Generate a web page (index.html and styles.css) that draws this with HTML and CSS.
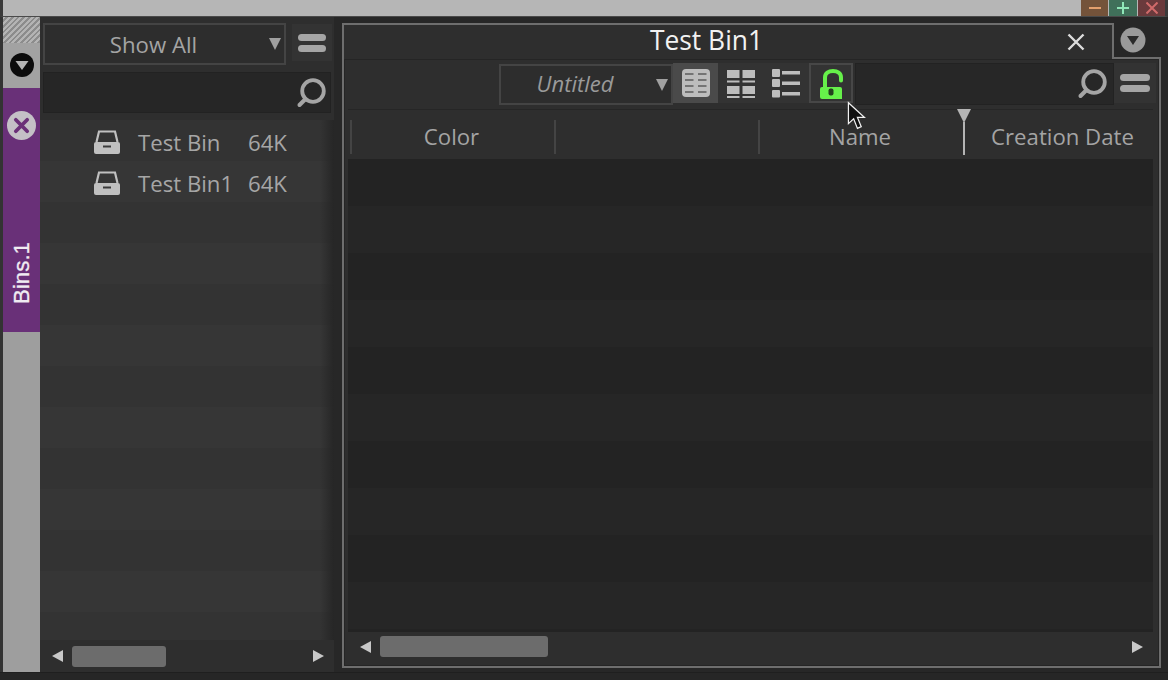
FILE: index.html
```html
<!DOCTYPE html>
<html lang="en">
<head>
<meta charset="utf-8">
<title>Bins</title>
<link rel="stylesheet" href="styles.css">
</head>
<body>
<div class="app">
  <header class="topbar">
    <div class="win win-min"><svg class="win-ico" viewBox="0 0 12 12"><path d="M0 6h12" stroke="#e3a06e" stroke-width="2"/></svg></div>
    <div class="win win-max"><svg class="win-ico" viewBox="0 0 12 12"><path d="M0 6h12M6 0v12" stroke="#8fe6b8" stroke-width="2"/></svg></div>
    <div class="win win-close"><svg class="win-ico" viewBox="0 0 12 12"><path d="M.5.5l11 11M11.500.5l-11 11" stroke="#d06a6a" stroke-width="2"/></svg></div>
  </header>
  <main class="workspace">
    <aside class="strip">
      <div class="hatch"></div>
      <div class="strip-menu">
        <svg class="ico-22" viewBox="0 0 24 24"><circle cx="12" cy="12" r="12" fill="#0c0c0c"/><path d="M5.500 8h13L12 17z" fill="#b4b4b4"/></svg>
      </div>
      <div class="strip-tab">
        <svg class="tab-close" viewBox="0 0 28 28"><circle cx="14" cy="14" r="14" fill="#c4c0c6"/><path d="M8.500 8.500l11 11M19.500 8.500l-11 11" stroke="#6b3078" stroke-width="3.600" stroke-linecap="round"/></svg>
        <span class="tab-label">Bins.1</span>
      </div>
    </aside>

    <section class="bins">
      <div class="bins-top">
        <div class="select select-all"><span class="select-text">Show All</span><i class="caret"></i></div>
        <div class="menu-btn"><i></i><i></i></div>
      </div>
      <div class="search search-left">
        <svg class="ico-search" viewBox="0 0 30 30"><circle cx="17" cy="13" r="10.800" fill="none" stroke="#a5a5a5" stroke-width="3.800"/><path d="M9.500 21l-6 6" stroke="#a5a5a5" stroke-width="4" stroke-linecap="round"/></svg>
      </div>
      <div class="bin-list">
        <div class="bin-row">
          <svg class="ico-bin" viewBox="0 0 28 24"><path d="M3.500 12L6 1.500h16L24.500 12" fill="none" stroke="#c0c0c0" stroke-width="2.200"/><path d="M1 14q0-2 2-2h22q2 0 2 2v8q0 2-2 2H3q-2 0-2-2z" fill="#c0c0c0"/><rect x="10" y="15.500" width="8" height="2" fill="#3a3a3a"/></svg>
          <span class="bin-name">Test Bin</span><span class="bin-size">64K</span>
        </div>
        <div class="bin-row">
          <svg class="ico-bin" viewBox="0 0 28 24"><path d="M3.500 12L6 1.500h16L24.500 12" fill="none" stroke="#c0c0c0" stroke-width="2.200"/><path d="M1 14q0-2 2-2h22q2 0 2 2v8q0 2-2 2H3q-2 0-2-2z" fill="#c0c0c0"/><rect x="10" y="15.500" width="8" height="2" fill="#3a3a3a"/></svg>
          <span class="bin-name">Test Bin1</span><span class="bin-size">64K</span>
        </div>
      </div>
      <div class="hscroll hscroll-left">
        <i class="arrow arrow-l"></i>
        <div class="scroll-track"><div class="thumb thumb-left"></div></div>
        <i class="arrow arrow-r"></i>
      </div>
    </section>

    <section class="viewer">
      <div class="title-row">
        <div class="tab">
          <span class="tab-title">Test Bin1</span>
          <svg class="tab-x" viewBox="0 0 18 18"><path d="M1.500 1.500l15 15M16.500 1.500l-15 15" stroke="#dcdcdc" stroke-width="2.400"/></svg>
        </div>
        <div class="tab-side">
          <svg class="ico-25" viewBox="0 0 26 26"><circle cx="13" cy="13" r="12.500" fill="#9a9a9a"/><path d="M7 9h12l-6 9z" fill="#2b2b2b"/></svg>
        </div>
      </div>
      <div class="viewer-body">
        <div class="toolbar">
          <div class="select select-view"><span class="select-text untitled">Untitled</span><i class="caret"></i></div>
          <div class="view-btn active">
            <svg class="ico-view" viewBox="0 0 30 30"><rect x="1" y="1" width="28" height="28" rx="4" fill="#bdbdbd"/><path d="M4 6h8.500M17 6h8.500M4 12h8.500M17 12h8.500M4 18h8.500M17 18h8.500M4 24h8.500M17 24h8.500" stroke="#5c5c5c" stroke-width="1.700"/></svg>
          </div>
          <div class="view-btn">
            <svg class="ico-view" viewBox="0 0 30 30" fill="#bdbdbd"><rect x="1" y="2" width="12.500" height="8"/><rect x="16.500" y="2" width="12.500" height="8"/><rect x="1" y="12.500" width="12.500" height="2"/><rect x="16.500" y="12.500" width="12.500" height="2"/><rect x="1" y="18" width="12.500" height="8"/><rect x="16.500" y="18" width="12.500" height="8"/><rect x="1" y="28" width="12.500" height="2"/><rect x="16.500" y="28" width="12.500" height="2"/></svg>
          </div>
          <div class="view-btn">
            <svg class="ico-view" viewBox="0 0 30 30" fill="#bdbdbd"><rect x="1" y="1" width="8" height="8" rx="1"/><rect x="11" y="3" width="18" height="3.500"/><rect x="1" y="11" width="8" height="8" rx="1"/><rect x="11" y="13.500" width="18" height="3.500"/><rect x="1" y="22" width="8" height="7.500" rx="1"/><rect x="11" y="24" width="18" height="3.500"/></svg>
          </div>
          <div class="lock-btn">
            <svg class="ico-lock" viewBox="0 0 23 30"><path d="M5 19V8.500C5 4 8.500 2 13 2s8 2 8 6.500v3" fill="none" stroke="#66f04a" stroke-width="4" stroke-linecap="round"/><path d="M0 20q0-2 2-2h18q2 0 2 2v10H2q-2 0-2-2z" fill="#66f04a"/><rect x="8.500" y="19.500" width="5" height="7" rx="2" fill="#24401e"/></svg>
          </div>
          <div class="search search-right">
            <svg class="ico-search" viewBox="0 0 30 30"><circle cx="17" cy="13" r="10.800" fill="none" stroke="#a5a5a5" stroke-width="3.800"/><path d="M9.500 21l-6 6" stroke="#a5a5a5" stroke-width="4" stroke-linecap="round"/></svg>
          </div>
          <div class="menu-btn menu-right"><i></i><i></i></div>
        </div>
        <div class="table">
          <div class="thead">
            <div class="col col-color">Color</div>
            <div class="col col-blank"></div>
            <div class="col col-name">Name</div>
            <div class="col col-date">Creation Date</div>
            <div class="playhead"><i class="playhead-tip"></i><i class="playhead-line"></i></div>
          </div>
          <div class="tbody"></div>
        </div>
        <div class="hscroll hscroll-right">
          <i class="arrow arrow-l"></i>
          <div class="scroll-track"><div class="thumb thumb-right"></div></div>
          <i class="arrow arrow-r"></i>
        </div>
      </div>
    </section>
  </main>
  <footer class="bottombar"></footer>
  <svg class="cursor" viewBox="0 0 20 32"><path d="M1.500 1.500v22l5.500-5 4 10 4-1.800-4-9.700h7.500z" fill="#111" stroke="#f2f2f2" stroke-width="1.300"/></svg>
</div>
</body>
</html>
```

FILE: styles.css
```css
* { box-sizing: border-box; }
html, body { margin: 0; height: 100%; }
body {
  background: #262626;
  font-family: "Open Sans", "Noto Sans", sans-serif;
  color: #a6a6a6;
  overflow: hidden;
}
i { display: block; }
svg { display: block; }

.app { position: relative; width: 1168px; height: 680px; display: flex; flex-direction: column; }

.topbar {
  height: 17px;
  flex: none;
  background: #b6b6b6;
  border-left: 3px solid #3a3a3a;
  border-right: 3px solid #3a3a3a;
  border-bottom: 1px solid #4a4a4a;
  display: flex;
  justify-content: flex-end;
  gap: 1px;
}
.win { height: 16px; display: flex; align-items: center; justify-content: center; }
.win-ico { width: 12px; height: 12px; }
.win-min { width: 27px; background: #74533a; }
.win-max { width: 28px; background: #40705a; }
.win-close { width: 27px; background: #6a3a3c; }

.workspace { flex: 1; display: flex; background: #272727; min-height: 0; }

.strip { width: 40px; flex: none; border-left: 3px solid #333; background: #9e9e9e; display: flex; flex-direction: column; }
.hatch {
  height: 26px;
  background: repeating-linear-gradient(135deg, #b4b4b4 0 2px, #8c8c8c 2px 4px);
}
.strip-menu { height: 45px; background: #a2a2a2; display: flex; justify-content: center; padding-top: 10px; }
.ico-22 { width: 24px; height: 24px; }
.strip-tab { height: 244px; background: #693078; display: flex; flex-direction: column; align-items: center; padding-top: 23px; }
.tab-close { width: 29px; height: 29px; }
.tab-label {
  writing-mode: vertical-rl;
  transform: rotate(180deg);
  font-family: "Liberation Sans", sans-serif;
  font-size: 22.300px;
  -webkit-text-stroke: 0.3px #f0ecf2;
  color: #f0ecf2;
  margin-top: 102px;
  line-height: 20px;
}

.bins { width: 294px; flex: none; background: #2e2e2e; display: flex; flex-direction: column; padding: 6px 0 0; }
.bins-top { display: flex; padding-left: 3px; height: 42px; gap: 6px; }
.select {
  display: flex;
  align-items: center;
  border: 2px solid #444;
  background: #2d2d2d;
  position: relative;
}
.select-all { width: 243px; height: 42px; }
.select-text { flex: 1; text-align: center; font-size: 22.200px; color: #a4a4a4; padding-right: 7px; }
.caret { width: 0; height: 0; border-left: 6.500px solid transparent; border-right: 6.500px solid transparent; border-top: 12px solid #a0a0a0; margin-right: 3px; flex: none; }
.menu-btn { width: 40px; height: 37px; margin-top: 1px; background: #333; display: flex; flex-direction: column; justify-content: center; gap: 4px; padding: 0 6px; }
.menu-btn i { height: 7px; border-radius: 4px; background: #a5a5a5; }

.search { display: flex; align-items: center; justify-content: flex-end; background: #262626; border: 1px solid #222; }
.search-left { margin: 7px 3px 0 3px; height: 41px; padding-right: 4px; }
.ico-search { width: 30px; height: 30px; }

.bin-list {
  flex: 1;
  margin-top: 7px;
  min-height: 0;
  padding-top: 2px;
  background:
    linear-gradient(90deg, transparent 280px, #262626 294px),
    repeating-linear-gradient(180deg, #333 0 41px, #363636 41px 82px);
}
.bin-row { height: 41px; display: flex; align-items: center; padding-left: 53px; font-size: 22.200px; color: #a6a6a6; }
.ico-bin { width: 28px; height: 24px; margin-right: 17px; margin-top: -2px; }
.bin-name { width: 110px; }
.bin-size { width: 50px; }

.hscroll { display: flex; align-items: center; background: #2e2e2e; }
.hscroll-left { height: 32px; padding: 0 10px 0 12px; }
.scroll-track { flex: 1; height: 100%; display: flex; align-items: center; }
.thumb { background: #6c6c6c; border-radius: 3px; }
.thumb-left { width: 94px; height: 21px; margin-left: 9px; }
.arrow { width: 0; height: 0; border-top: 6.500px solid transparent; border-bottom: 6.500px solid transparent; flex: none; }
.arrow-l { border-right: 11px solid #c8c8c8; }
.arrow-r { border-left: 11px solid #c8c8c8; }

.viewer { flex: 1; padding: 6px 7px 4px 8px; background: #272727; display: flex; flex-direction: column; min-width: 0; }
.title-row { display: flex; height: 36px; flex: none; }
.tab {
  flex: 1;
  position: relative;
  background: #2e2e2e;
  border: 2px solid #6e6e6e;
  border-bottom: 0;
  display: flex;
  align-items: center;
  justify-content: center;
  padding-right: 43px;
}
.tab-title { font-size: 26.400px; color: #f2f2f2; line-height: 30px; margin-top: -5px; }
.tab-x { position: absolute; right: 27px; top: 8px; width: 18px; height: 18px; }
.tab-side { width: 47px; flex: none; border-bottom: 2px solid #6e6e6e; padding: 4px 0 0 6px; }
.ico-25 { width: 26px; height: 26px; }

.viewer-body {
  flex: 1;
  min-height: 0;
  background: #2e2e2e;
  border: 2px solid #6e6e6e;
  border-top: 0;
  padding: 4px 3px 2px 4px;
  display: flex;
  flex-direction: column;
  box-shadow: inset 0 0 0 1px #252525;
}

.toolbar { display: flex; align-items: stretch; height: 42px; flex: none; padding-left: 151px; }
.select-view { width: 174px; height: 41px; margin-top: 1px; }
.untitled { font-style: italic; font-size: 22px; color: #9a9a9a; margin-top: -3px; }
.view-btn { width: 45px; height: 40px; display: flex; align-items: center; justify-content: center; background: #333; }
.view-btn.active { background: #4a4a4a; }
.view-btn:nth-of-type(4) { width: 46px; }
.ico-view { width: 30px; height: 30px; }
.lock-btn { width: 44px; height: 40px; border: 2px solid #474747; display: flex; align-items: center; justify-content: center; background: #333; }
.ico-lock { width: 23px; height: 30px; margin-top: 1px; }
.search-right { flex: 1; margin-left: 2px; background: #272727; padding-right: 6px; }
.menu-right { width: 42px; height: 40px; margin-top: 0; background: #333; flex: none; }

.table { flex: 1; min-height: 0; margin-top: 4px; display: flex; flex-direction: column; padding-right: 3px; }
.thead { height: 50px; flex: none; display: flex; position: relative; background: #2e2e2e; border-top: 1px solid #262626; font-size: 22.200px; color: #a4a4a4; padding-top: 10px; }
.col { height: 34px; text-align: center; line-height: 34px; border-left: 2px solid #444; }
.col-color { width: 204px; margin-left: 2px; padding-right: 3px; }
.col-blank { width: 204px; }
.col-name { width: 206px; padding-right: 4px; }
.col-date { flex: 1; border-left: 0; white-space: nowrap; padding-left: 8px; }
.playhead { position: absolute; left: 608px; top: -1px; width: 16px; display: flex; flex-direction: column; align-items: center; }
.playhead-tip { width: 0; height: 0; border-left: 7px solid transparent; border-right: 7px solid transparent; border-top: 14px solid #b4b4b4; }
.playhead-line { width: 2px; height: 33px; background: #b4b4b4; margin-top: -1px; }
.tbody { flex: 1; min-height: 0; background: repeating-linear-gradient(180deg, #232323 0 47px, #262626 47px 94px); }

.hscroll-right { height: 32px; flex: none; padding: 0 13px 0 12px; }
.thumb-right { width: 168px; height: 21px; margin-left: 9px; margin-top: -4px; }
.hscroll-right .arrow { margin-top: -2px; }

.bottombar { height: 8px; flex: none; background: #262626; border-top: 1px solid #1f1f1f; }

.cursor { position: absolute; left: 847px; top: 101px; width: 19px; height: 31px; }
```
